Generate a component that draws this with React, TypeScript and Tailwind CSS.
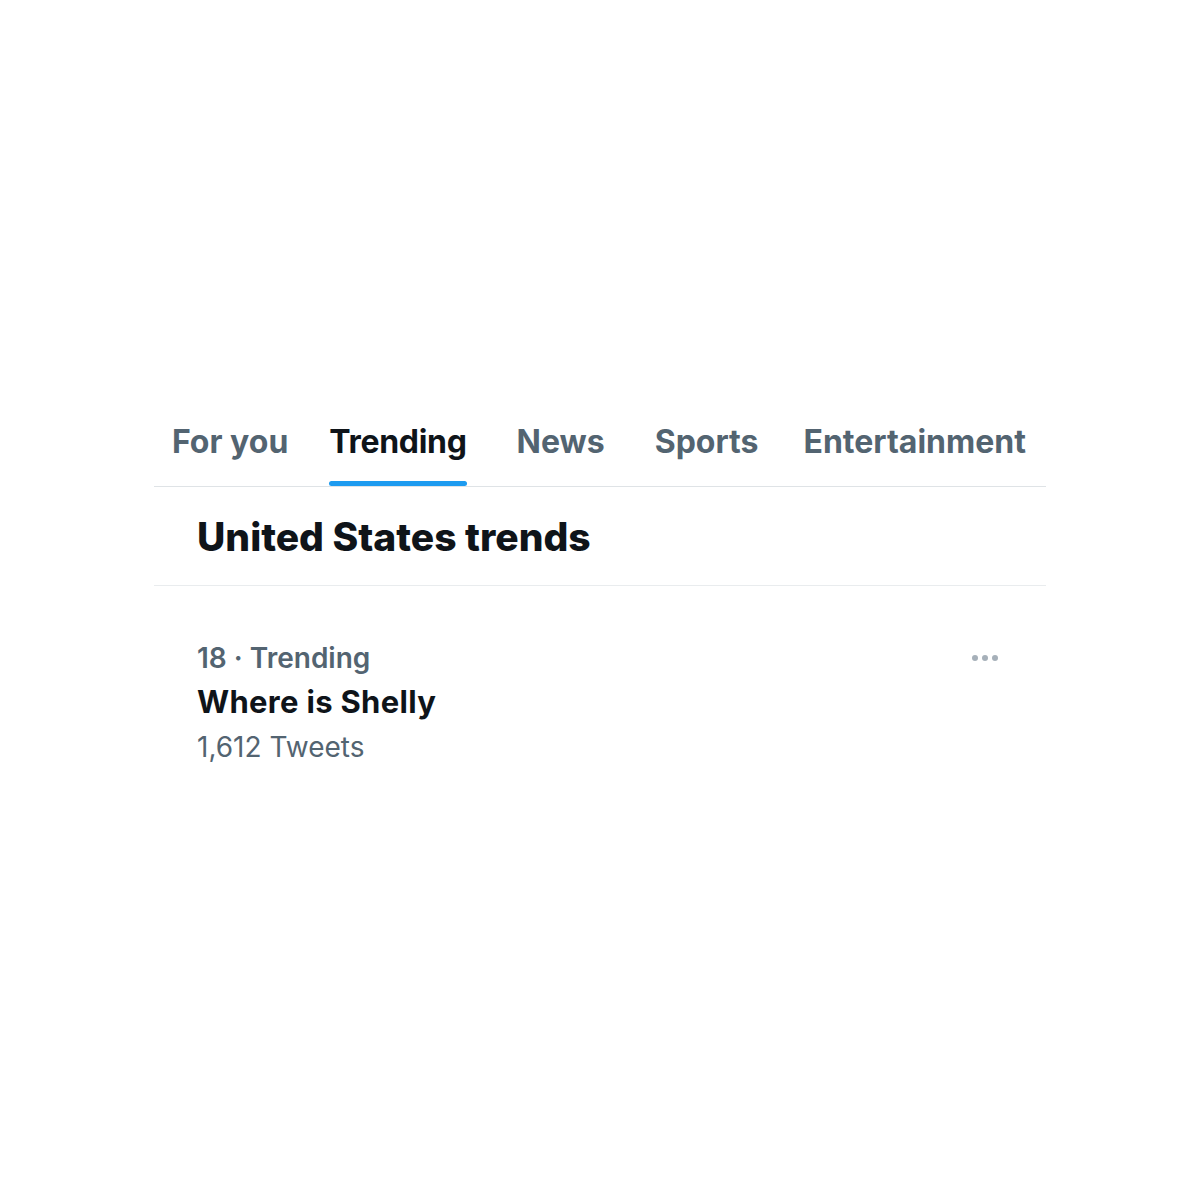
const tabs = ['For you', 'Trending', 'News', 'Sports', 'Entertainment']

export default function App() {
  return (
    <div className="min-h-[1200px] w-full bg-white pt-[400px] font-['Inter','Noto_Sans',sans-serif] text-[#0f1419]">
      <div className="mx-[154px] w-[892px]">
        {/* Tabs */}
        <div className="flex h-[87px] items-end border-b border-[#dfe3e6] pl-[18px]">
          {tabs.map((t, i) => (
            <div
              key={t}
              className={
                'flex h-full flex-col justify-end ' +
                (i === 0 ? 'mr-[41px]' : i === 1 ? 'mr-[50px]' : i === 2 ? 'mr-[50px]' : i === 3 ? 'mr-[45px]' : '')
              }
            >
              <span
                className={
                  'text-[32px] font-bold leading-none ' +
                  (t === 'Trending' ? 'text-[#0f1419] tracking-[-0.01em]' : 'text-[#536471]')
                }
              >
                {t}
              </span>
              <div className={'mt-[23px] h-[5px] rounded-full ' + (t === 'Trending' ? 'bg-[#1d9bf0]' : 'bg-transparent')} />
            </div>
          ))}
        </div>

        {/* Header */}
        <div className="flex h-[99px] items-center border-b border-[#e9ecee] pl-[43px]">
          <h1 className="text-[39px] font-extrabold leading-none">United States trends</h1>
        </div>

        {/* Trend item */}
        <div className="flex items-start justify-between pt-[54px] pl-[43px] pr-[48px]">
          <div className="flex flex-col">
            <div className="text-[28px] font-semibold leading-[36px] text-[#536471]">
              18 · Trending
            </div>
            <div className="mt-[8px] text-[31px] font-bold leading-[36px] tracking-[0.01em] text-[#0f1419]">
              Where is Shelly
            </div>
            <div className="mt-[9px] text-[28px] font-normal leading-[36px] text-[#536471]">1,612 Tweets</div>
          </div>
          <div className="mt-[15px] flex gap-[4px]">
            <span className="h-[6px] w-[6px] rounded-full bg-[#a6b0b9]" />
            <span className="h-[6px] w-[6px] rounded-full bg-[#a6b0b9]" />
            <span className="h-[6px] w-[6px] rounded-full bg-[#a6b0b9]" />
          </div>
        </div>
      </div>
    </div>
  )
}
